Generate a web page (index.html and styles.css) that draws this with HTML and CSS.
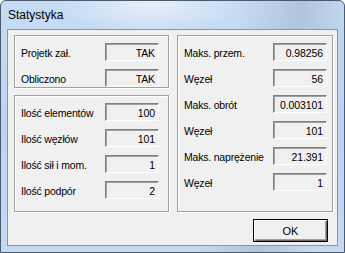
FILE: index.html
```html
<!DOCTYPE html>
<html lang="pl">
<head>
  <meta charset="UTF-8">
  <title>Statystyka</title>
  <link rel="stylesheet" href="styles.css">
</head>
<body>
  <div class="window">
    <div class="titlebar">Statystyka</div>
    <div class="client">
      <div class="columns">
        <div class="left">
          <div class="group">
            <div class="row"><span class="label">Projetk zał.</span><span class="field">TAK</span></div>
            <div class="row"><span class="label">Obliczono</span><span class="field">TAK</span></div>
          </div>
          <div class="group grow">
            <div class="row"><span class="label">Ilość elementów</span><span class="field">100</span></div>
            <div class="row"><span class="label">Ilość węzłów</span><span class="field">101</span></div>
            <div class="row"><span class="label">Ilość sił i mom.</span><span class="field">1</span></div>
            <div class="row"><span class="label">Ilość podpór</span><span class="field">2</span></div>
          </div>
        </div>
        <div class="group right">
          <div class="row"><span class="label">Maks. przem.</span><span class="field">0.98256</span></div>
          <div class="row"><span class="label">Węzeł</span><span class="field">56</span></div>
          <div class="row"><span class="label">Maks. obrót</span><span class="field">0.003101</span></div>
          <div class="row"><span class="label">Węzeł</span><span class="field">101</span></div>
          <div class="row"><span class="label">Maks. naprężenie</span><span class="field">21.391</span></div>
          <div class="row"><span class="label">Węzeł</span><span class="field">1</span></div>
        </div>
      </div>
      <div class="actions">
        <button class="button">OK</button>
      </div>
    </div>
  </div>
</body>
</html>
```

FILE: styles.css
```css
body {
  margin: 0;
  width: 345px;
  height: 253px;
  overflow: hidden;
  background: #fff;
  font-family: "Liberation Sans", Arial, sans-serif;
}

.window {
  width: 345px;
  height: 253px;
  box-sizing: border-box;
  border: 1px solid #4b5a6e;
  border-radius: 6px 6px 0 0;
  background:
    radial-gradient(ellipse 90px 30px at 150px 4px, rgba(255, 255, 255, 0.55), rgba(255, 255, 255, 0)),
    linear-gradient(100deg, rgba(255, 255, 255, 0) 62%, rgba(150, 170, 195, 0.45) 78%, rgba(255, 255, 255, 0) 92%),
    linear-gradient(180deg, #c7dcf3 0%, #bcd4ef 50%, #c3daf3 100%);
  display: flex;
  flex-direction: column;
}

.titlebar {
  height: 28px;
  padding-left: 7px;
  font-size: 12px;
  line-height: 29px;
  color: #000;
}

.client {
  margin: 0 6px 6px;
  flex: 1;
  background: #f0f0f0;
  border: 1px solid #8597ad;
  padding: 5px 5px 0 6px;
  display: flex;
  flex-direction: column;
}

.columns {
  display: grid;
  grid-template-columns: 155px 156px;
  gap: 8px;
  height: 177px;
}

.left {
  display: flex;
  flex-direction: column;
  gap: 7px;
}

.group {
  border: 1px solid #a0a0a0;
  box-shadow: inset 1px 1px 0 #fff, 1px 1px 0 #fff;
  padding: 7px 9px 0 6px;
  display: flex;
  flex-direction: column;
  gap: 8px;
}

.group.grow {
  flex: 1;
}

.group.right {
  padding-right: 5px;
}

.row {
  display: flex;
  justify-content: space-between;
  align-items: center;
  height: 18px;
}

.label {
  font-size: 10.5px;
  letter-spacing: -0.2px;
  line-height: 18px;
  padding-top: 2px;
  color: #000;
}

.field {
  width: 54px;
  height: 18px;
  box-sizing: border-box;
  border: 1px solid;
  border-color: #808080 #fff #fff #808080;
  box-shadow: inset 1px 1px 0 #a0a0a0;
  background: #f0f0f0;
  font-size: 10.5px;
  letter-spacing: -0.1px;
  line-height: 18px;
  text-align: right;
  padding-right: 3px;
  color: #000;
}

.actions {
  display: flex;
  justify-content: flex-end;
  padding: 7px 4px 0 0;
}

.button {
  width: 75px;
  height: 23px;
  border: 1px solid #000;
  background: #f0f0f0;
  box-shadow: inset 1px 1px 0 #fff, inset -1px -1px 0 #696969, inset -2px -2px 0 #a0a0a0;
  font-family: "Liberation Sans", Arial, sans-serif;
  font-size: 11px;
  color: #000;
  padding: 1px 0 0;
  cursor: pointer;
}
```
